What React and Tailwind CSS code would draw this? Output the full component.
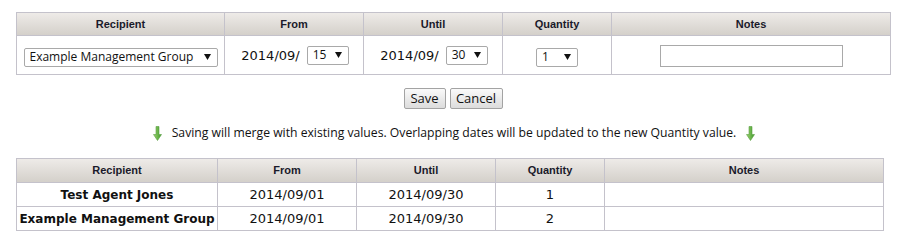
const TOP_COLS = [208, 139, 139, 109, 279];
const BOTTOM_COLS = [201, 139, 139, 109, 279];
const HEADERS = ["Recipient", "From", "Until", "Quantity", "Notes"];
const ROWS = [
  { name: "Test Agent Jones", from: "2014/09/01", until: "2014/09/30", qty: 1, notes: "" },
  { name: "Example Management Group", from: "2014/09/01", until: "2014/09/30", qty: 2, notes: "" },
];

const sans = { fontFamily: '"Open Sans", "Noto Sans", sans-serif' };

function HeaderRow({ height }) {
  return (
    <tr className={`${height} bg-gradient-to-b from-[#eeebe8] to-[#d3cfc9]`}>
      {HEADERS.map((h) => (
        <th
          key={h}
          className="border border-[#c4c2cb] text-center text-[11px] font-bold text-[#1a1a2a] font-['Liberation_Sans',Arial,sans-serif]"
        >
          {h}
        </th>
      ))}
    </tr>
  );
}

function FakeSelect({ value, width }) {
  return (
    <div
      className={`inline-flex h-[19px] ${width} items-center justify-between whitespace-nowrap rounded-[2px] border border-[#a9a9a9] bg-white pl-[5px] pr-[6px] text-[12px] leading-none text-[#111]`}
      style={sans}
    >
      <span>{value}</span>
      <svg width="7" height="6" viewBox="0 0 7 6">
        <path d="M0 0h7L3.5 6z" fill="#111" />
      </svg>
    </div>
  );
}

function DownArrow() {
  return (
    <svg width="9" height="15" viewBox="0 0 9 15" className="inline-block">
      <defs>
        <linearGradient id="ga" x1="0" y1="0" x2="1" y2="0">
          <stop offset="0" stopColor="#9ed36e" />
          <stop offset="1" stopColor="#3e9a2c" />
        </linearGradient>
      </defs>
      <path d="M3 0.5h3v8h2.5L4.5 14.5L0.5 8.5H3z" fill="url(#ga)" stroke="#5aa043" strokeWidth="0.6" />
    </svg>
  );
}

export default function App() {
  return (
    <div className="w-[903px] h-[245px] bg-white pt-[12px] pl-[16px] text-[#111]">
      <div className="w-[874px]">
        <table className="w-[874px] table-fixed border-collapse">
          <colgroup>
            {TOP_COLS.map((w, i) => (
              <col key={i} style={{ width: w }} />
            ))}
          </colgroup>
          <thead>
            <HeaderRow height="h-[23px]" />
          </thead>
          <tbody>
            <tr className="h-[39px]">
              <td className="border border-[#c4c2cb] text-center">
                <FakeSelect value="Example Management Group" width="w-[194px]" />
              </td>
              <td className="border border-[#c4c2cb]">
                <div className="flex items-center justify-center gap-[7px] pl-[2px]">
                  <span className="text-[13px] font-['DejaVu_Sans',Verdana,sans-serif] leading-none">2014/09/</span>
                  <FakeSelect value="15" width="w-[42px]" />
                </div>
              </td>
              <td className="border border-[#c4c2cb]">
                <div className="flex items-center justify-center gap-[7px] pl-[2px]">
                  <span className="text-[13px] font-['DejaVu_Sans',Verdana,sans-serif] leading-none">2014/09/</span>
                  <FakeSelect value="30" width="w-[42px]" />
                </div>
              </td>
              <td className="border border-[#c4c2cb] text-center">
                <FakeSelect value="1" width="w-[42px]" />
              </td>
              <td className="border border-[#c4c2cb] text-center">
                <input
                  type="text"
                  className="h-[22px] w-[183px] border border-[#a9a9a9] bg-white px-1 text-[12px] outline-none"
                />
              </td>
            </tr>
          </tbody>
        </table>

        <div className="mt-[13px] flex justify-center gap-[4px]" style={sans}>
          <button className="h-[21px] w-[42px] rounded-[2px] border border-[#a3a3a3] bg-gradient-to-b from-[#fafafa] to-[#dcdcdc] text-[13px] leading-none text-[#111]">
            Save
          </button>
          <button className="h-[21px] w-[53px] rounded-[2px] border border-[#a3a3a3] bg-gradient-to-b from-[#fafafa] to-[#dcdcdc] text-[13px] leading-none text-[#111]">
            Cancel
          </button>
        </div>

        <div className="mt-[14px] flex h-[20px] items-center justify-center gap-[10px] pl-[2px]">
          <DownArrow />
          <span className="text-[12.2px] text-[#111]" style={sans}>
            Saving will merge with existing values. Overlapping dates will be updated to the new Quantity value.
          </span>
          <DownArrow />
        </div>
      </div>

      <table className="mt-[15px] w-[867px] table-fixed border-collapse">
        <colgroup>
          {BOTTOM_COLS.map((w, i) => (
            <col key={i} style={{ width: w }} />
          ))}
        </colgroup>
        <thead>
          <HeaderRow height="h-[24px]" />
        </thead>
        <tbody>
          {ROWS.map((r) => (
            <tr key={r.name} className="h-[24px]">
              <td className="border border-[#c4c2cb] text-center text-[12px] font-bold font-['DejaVu_Sans',Verdana,sans-serif]">
                {r.name}
              </td>
              <td className="border border-[#c4c2cb] text-center text-[13px] font-['DejaVu_Sans',Verdana,sans-serif]">
                {r.from}
              </td>
              <td className="border border-[#c4c2cb] text-center text-[13px] font-['DejaVu_Sans',Verdana,sans-serif]">
                {r.until}
              </td>
              <td className="border border-[#c4c2cb] text-center text-[13px] font-['DejaVu_Sans',Verdana,sans-serif]">
                {r.qty}
              </td>
              <td className="border border-[#c4c2cb]">{r.notes}</td>
            </tr>
          ))}
        </tbody>
      </table>
    </div>
  );
}
